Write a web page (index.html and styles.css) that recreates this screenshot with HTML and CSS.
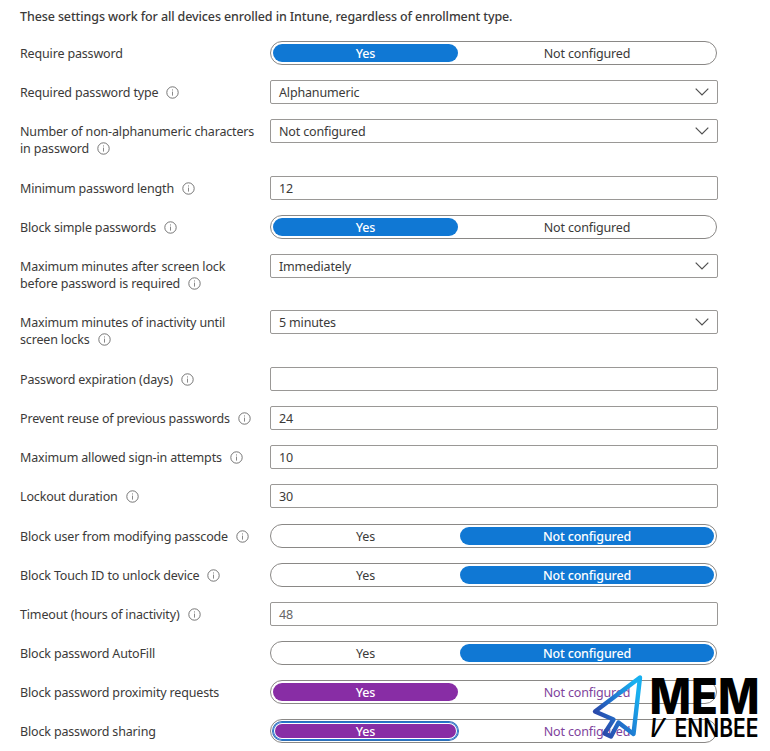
FILE: index.html
```
<!DOCTYPE html>
<html lang="en">
<head>
<meta charset="utf-8">
<title>Password settings</title>
<link rel="stylesheet" href="styles.css">
</head>
<body>
<svg class="defs" width="0" height="0">
  <symbol id="info" viewBox="0 0 13 13"><circle cx="6.5" cy="6.5" r="5.7" fill="none" stroke="#666" stroke-width="0.9"/><path d="M6.5 5.6v4" stroke="#888" stroke-width="1"/><path d="M6.5 3.4v1.1" stroke="#888" stroke-width="1"/></symbol>
  <symbol id="chev" viewBox="0 0 14 8"><path d="M.7.7 7 7 13.3.7" fill="none" stroke="#505050" stroke-width="1.2"/></symbol>
</svg>
<main class="panel">
  <h1 class="intro">These settings work for all devices enrolled in Intune, regardless of enrollment type.</h1>
  <div class="row"><div class="label">Require password</div><div class="toggle"><span class="opt yes on">Yes</span><span class="opt no">Not configured</span></div></div>
  <div class="row"><div class="label">Required password type<svg class="info"><use href="#info"/></svg></div><div class="field">Alphanumeric<svg class="chev"><use href="#chev"/></svg></div></div>
  <div class="row tall"><div class="label">Number of non-alphanumeric characters<br>in password<svg class="info"><use href="#info"/></svg></div><div class="field">Not configured<svg class="chev"><use href="#chev"/></svg></div></div>
  <div class="row"><div class="label">Minimum password length<svg class="info"><use href="#info"/></svg></div><div class="field">12</div></div>
  <div class="row"><div class="label">Block simple passwords<svg class="info"><use href="#info"/></svg></div><div class="toggle"><span class="opt yes on">Yes</span><span class="opt no">Not configured</span></div></div>
  <div class="row medium"><div class="label">Maximum minutes after screen lock<br>before password is required<svg class="info"><use href="#info"/></svg></div><div class="field">Immediately<svg class="chev"><use href="#chev"/></svg></div></div>
  <div class="row tall"><div class="label">Maximum minutes of inactivity until<br>screen locks<svg class="info"><use href="#info"/></svg></div><div class="field">5 minutes<svg class="chev"><use href="#chev"/></svg></div></div>
  <div class="row"><div class="label">Password expiration (days)<svg class="info"><use href="#info"/></svg></div><div class="field"></div></div>
  <div class="row"><div class="label">Prevent reuse of previous passwords<svg class="info"><use href="#info"/></svg></div><div class="field">24</div></div>
  <div class="row"><div class="label">Maximum allowed sign-in attempts<svg class="info"><use href="#info"/></svg></div><div class="field">10</div></div>
  <div class="row last-input"><div class="label">Lockout duration<svg class="info"><use href="#info"/></svg></div><div class="field">30</div></div>
  <div class="row"><div class="label">Block user from modifying passcode<svg class="info"><use href="#info"/></svg></div><div class="toggle"><span class="opt yes">Yes</span><span class="opt no on">Not configured</span></div></div>
  <div class="row"><div class="label">Block Touch ID to unlock device<svg class="info"><use href="#info"/></svg></div><div class="toggle"><span class="opt yes">Yes</span><span class="opt no on">Not configured</span></div></div>
  <div class="row"><div class="label">Timeout (hours of inactivity)<svg class="info"><use href="#info"/></svg></div><div class="field muted">48</div></div>
  <div class="row"><div class="label">Block password AutoFill</div><div class="toggle"><span class="opt yes">Yes</span><span class="opt no on">Not configured</span></div></div>
  <div class="row"><div class="label">Block password proximity requests</div><div class="toggle changed"><span class="opt yes on">Yes</span><span class="opt no">Not configured</span></div></div>
  <div class="row"><div class="label">Block password sharing</div><div class="toggle changed"><span class="opt yes on focus">Yes</span><span class="opt no">Not configured</span></div></div>
</main>
<svg class="logo" viewBox="590 655 180 96">
  <defs><linearGradient id="g" gradientUnits="userSpaceOnUse" x1="598" y1="722" x2="642" y2="702"><stop offset="0" stop-color="#2b47a8"/><stop offset=".45" stop-color="#2072cc"/><stop offset="1" stop-color="#18b0f0"/></linearGradient></defs>
  <path d="M640 677.5 595 711.5 613.5 719.5 604.5 733.5 611 736.5 618.5 722.5 633.5 734Z" fill="none" stroke="url(#g)" stroke-width="4.4" stroke-linejoin="round"/>
  <text class="mem" x="649.5" y="713.5" textLength="110" lengthAdjust="spacingAndGlyphs">MEM</text>
  <text class="venn" transform="translate(646 737) skewX(-19) scale(.75 1)" x="0" y="0">V</text>
  <text class="venn" x="674.5" y="737" textLength="84" lengthAdjust="spacingAndGlyphs">ENNBEE</text>
</svg>
</body>
</html>
```
FILE: styles.css
```
* { box-sizing: border-box; }
body { margin: 0; width: 770px; height: 751px; overflow: hidden; position: relative; background: #fff; color: #3b3a39; font: 12.5px/17px "Noto Sans", sans-serif; letter-spacing: -0.16px; }
.defs { position: absolute; }
.panel { padding: 8px 0 0 20px; }
.intro { margin: 0; height: 33px; font-size: 12.5px; line-height: 17px; font-weight: 500; letter-spacing: -0.11px; white-space: nowrap; }
.row { display: grid; grid-template-columns: 250px 448px; height: 39px; align-items: start; }
.row.tall { height: 57px; }
.row.medium { height: 56px; }
.row.last-input { height: 40px; }
.label { padding-top: 4px; white-space: nowrap; }
.info { width: 13px; height: 13px; margin-left: 8px; vertical-align: -2px; }
.field { display: flex; align-items: center; justify-content: space-between; height: 24px; padding: 0 8px; border: 1px solid #9a9896; border-radius: 2px; }
.muted { color: #666; }
.chev { width: 14px; height: 8px; }
.toggle { display: flex; justify-content: space-between; width: 447px; height: 24px; padding: 2px; border: 1px solid #8a8886; border-radius: 12px; }
.opt { display: flex; align-items: center; justify-content: center; height: 18px; border-radius: 9px; }
.yes { width: 185px; }
.no { width: 254px; }
.on { background: #1078d4; color: #fff; font-weight: 500; }
.changed .on { background: #882da5; }
.changed .no { color: #80439c; }
.changed .focus { box-shadow: 0 0 0 1px #2c6fb8, inset 0 0 0 1px #2378d0, inset 0 0 0 2px #fff; }
.logo { position: absolute; left: 590px; top: 655px; width: 180px; height: 96px; letter-spacing: 0; }
.mem { font: 800 50px Inter, sans-serif; }
.venn { font: 600 26px Inter, sans-serif; }
```
